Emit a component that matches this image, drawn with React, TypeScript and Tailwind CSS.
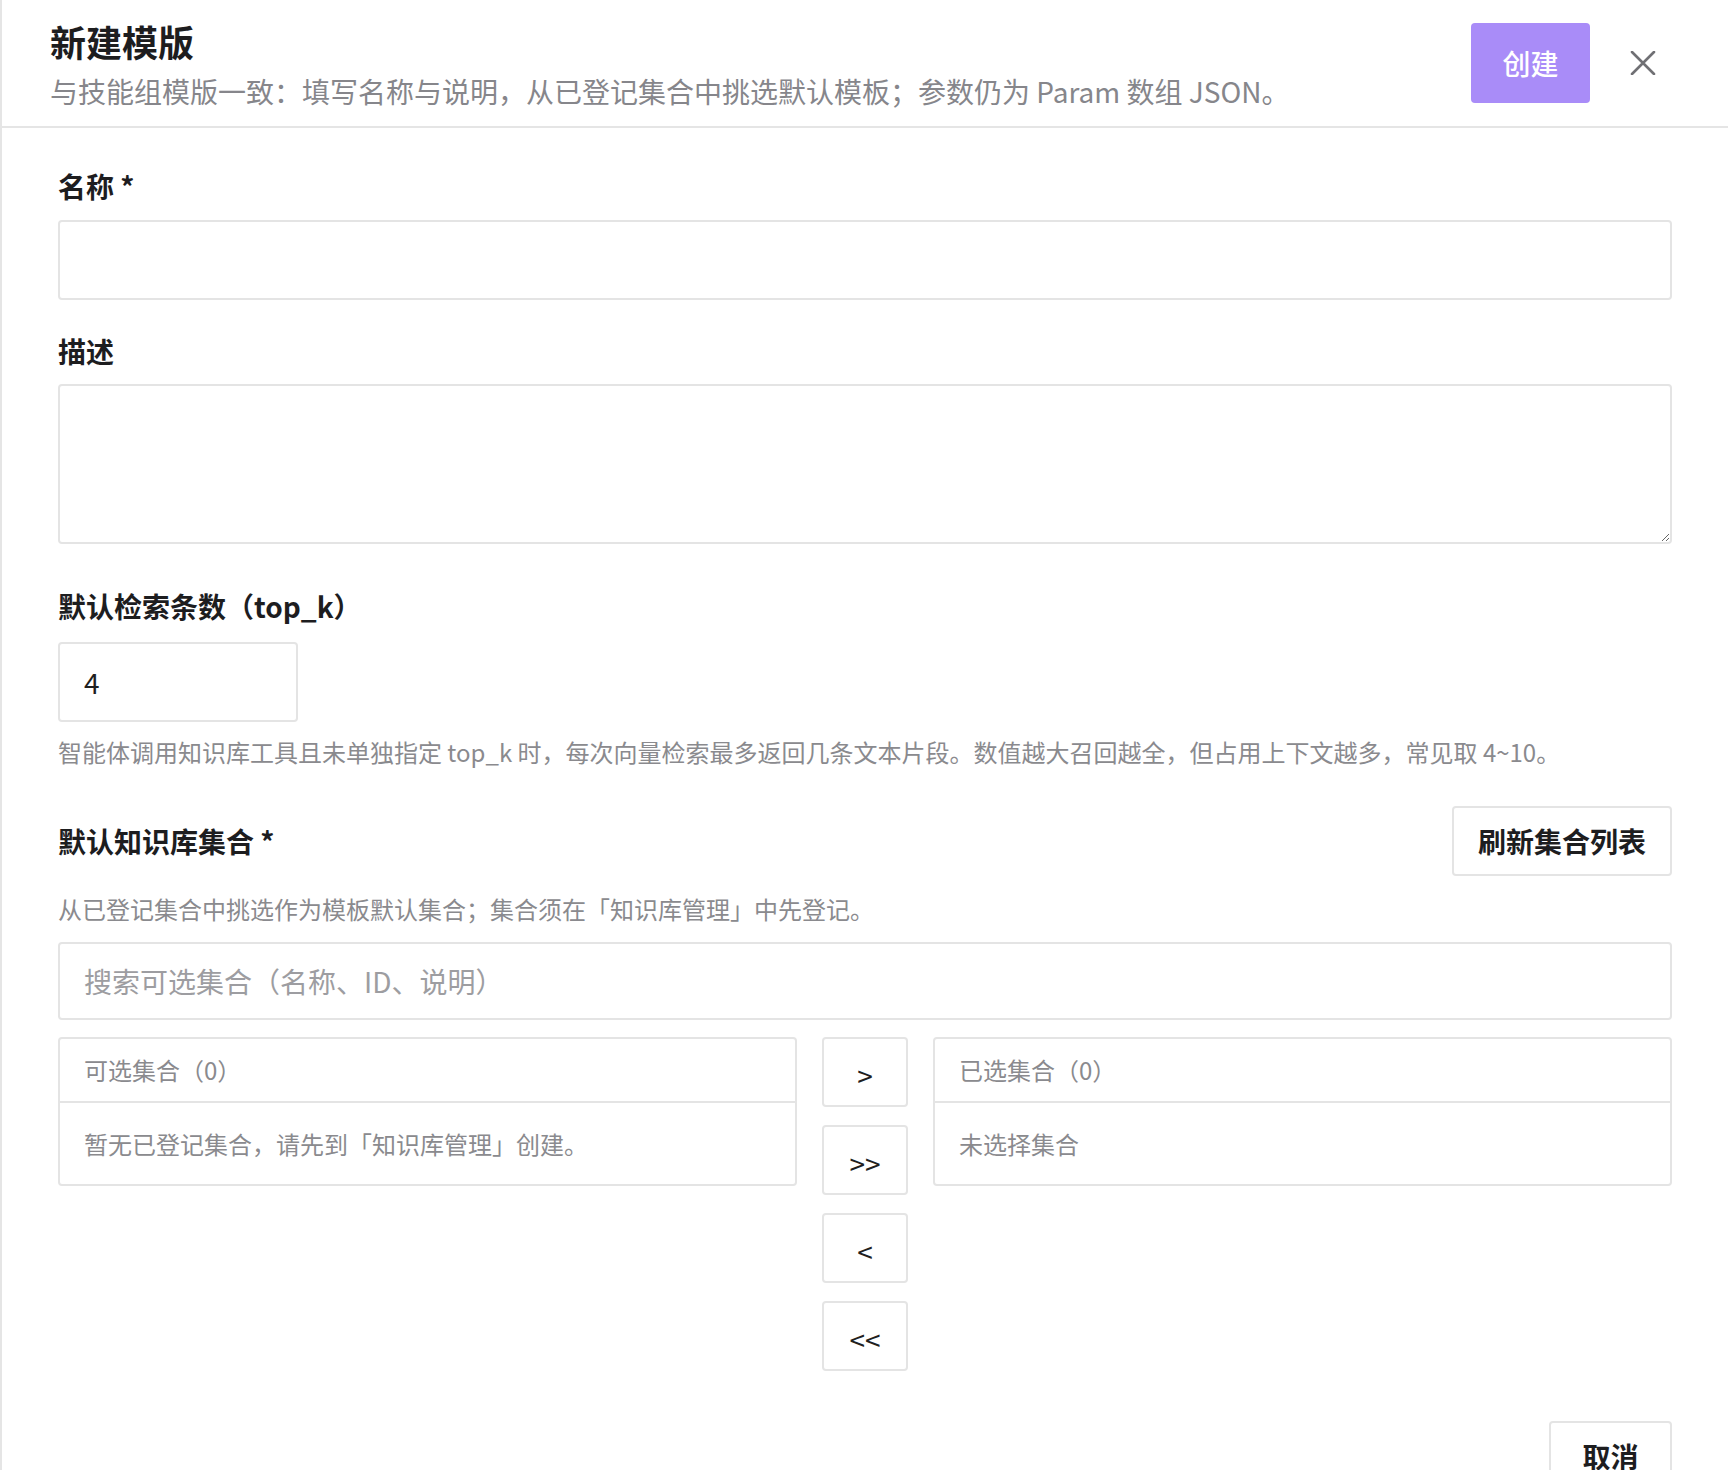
import React from "react";

const font = { fontFamily: '"Noto Sans CJK SC", "Noto Sans", sans-serif' };

function ArrowBtn({ label }: { label: string }) {
  return (
    <button className="h-[70px] w-[86px] rounded-[4px] border-2 border-[#e4e4e4] bg-white text-[28px] leading-none text-[#1f1f1f] flex items-center justify-center">
      <span className="mt-[6px]">{label}</span>
    </button>
  );
}

function Panel({ title, body }: { title: string; body: string }) {
  return (
    <div className="flex-1 rounded-[4px] border-2 border-[#e4e4e4] bg-white">
      <div className="h-[64px] border-b-2 border-[#e4e4e4] pl-[24px] flex items-center text-[24px] leading-[32px] text-[#8a8a8e]">
        {title}
      </div>
      <div className="h-[81px] pl-[24px] flex items-center text-[24px] leading-[32px] text-[#8a8a8e]">
        {body}
      </div>
    </div>
  );
}

export default function App() {
  return (
    <div style={font} className="min-h-[1470px] w-[1728px] bg-white border-l-2 border-[#e5e5e5]">
      {/* Header */}
      <div className="h-[128px] border-b-2 border-[#e5e5e5] flex items-center justify-between pl-[48px] pr-[72px]">
        <div className="flex flex-col pt-[4px]">
          <div className="text-[36px] leading-[40px] font-bold text-[#1d1d1f]">新建模版</div>
          <div className="mt-[12px] text-[28px] leading-[36px] text-[#86868b]">
            与技能组模版一致：填写名称与说明，从已登记集合中挑选默认模板；参数仍为 Param 数组 JSON。
          </div>
        </div>
        <div className="flex items-center gap-[40px]">
          <button className="h-[80px] w-[119px] rounded-[4px] bg-[#a98cf8] text-white text-[28px] leading-none font-medium">
            创建
          </button>
          <svg width="26" height="24" viewBox="0 0 26 24" className="text-[#707074]">
            <path d="M2 1 L24 23 M24 1 L2 23" stroke="currentColor" strokeWidth="2.6" strokeLinecap="round" fill="none" />
          </svg>
        </div>
      </div>

      {/* Body */}
      <div className="pl-[56px] pr-[56px] pt-[40px]">
        <div className="text-[28px] leading-[36px] font-semibold text-[#1d1d1f]">名称 *</div>
        <input className="mt-[16px] block h-[80px] w-full rounded-[4px] border-2 border-[#e4e4e4] px-[24px] text-[28px] outline-none" />

        <div className="mt-[33px] text-[28px] leading-[36px] font-semibold text-[#1d1d1f]">描述</div>
        <textarea className="mt-[15px] block h-[160px] w-full rounded-[4px] border-2 border-[#e4e4e4] px-[24px] py-[16px] text-[28px] outline-none" />

        <div className="mt-[44px] text-[28px] leading-[36px] font-semibold text-[#1d1d1f]">默认检索条数（top_k）</div>
        <input
          defaultValue="4"
          className="mt-[18px] block h-[80px] w-[240px] rounded-[4px] border-2 border-[#e4e4e4] px-[24px] text-[28px] text-[#1f1f1f] outline-none"
        />
        <div className="mt-[14px] text-[24px] leading-[32px] text-[#8a8a8e]">
          智能体调用知识库工具且未单独指定 top_k 时，每次向量检索最多返回几条文本片段。数值越大召回越全，但占用上下文越多，常见取 4~10。
        </div>

        <div className="mt-[38px] flex items-center justify-between">
          <div className="text-[28px] leading-[36px] font-semibold text-[#1d1d1f]">默认知识库集合 *</div>
          <button className="h-[70px] w-[220px] rounded-[4px] border-2 border-[#e4e4e4] bg-white text-[28px] leading-none font-semibold text-[#1d1d1f]">
            刷新集合列表
          </button>
        </div>
        <div className="mt-[17px] text-[24px] leading-[32px] text-[#8a8a8e]">
          从已登记集合中挑选作为模板默认集合；集合须在「知识库管理」中先登记。
        </div>
        <input
          placeholder="搜索可选集合（名称、ID、说明）"
          className="mt-[17px] block h-[78px] w-full rounded-[4px] border-2 border-[#e4e4e4] px-[24px] text-[28px] outline-none placeholder:text-[#9d9da1]"
        />

        <div className="mt-[17px] flex items-start gap-[25px]">
          <Panel title="可选集合（0）" body="暂无已登记集合，请先到「知识库管理」创建。" />
          <div className="flex flex-col gap-[18px]">
            <ArrowBtn label=">" />
            <ArrowBtn label=">>" />
            <ArrowBtn label="<" />
            <ArrowBtn label="<<" />
          </div>
          <Panel title="已选集合（0）" body="未选择集合" />
        </div>

        <div className="mt-[50px] flex justify-end">
          <button className="h-[70px] w-[123px] rounded-[4px] border-2 border-[#e4e4e4] bg-white text-[28px] leading-none font-semibold text-[#1d1d1f]">
            取消
          </button>
        </div>
      </div>
    </div>
  );
}
